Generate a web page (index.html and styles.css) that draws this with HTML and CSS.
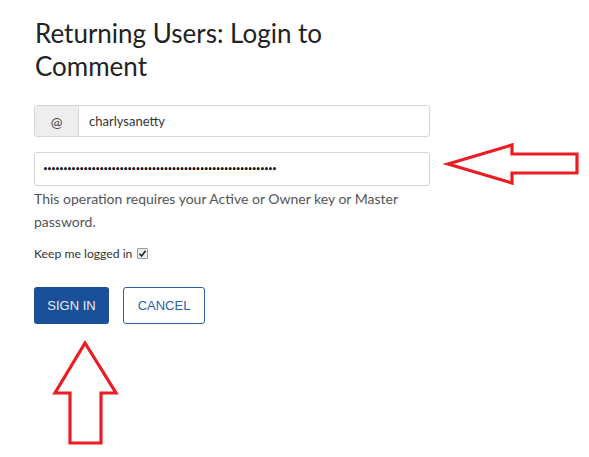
FILE: index.html
```html
<!DOCTYPE html>
<html>
<head>
<meta charset="utf-8">
<link rel="stylesheet" href="styles.css">
</head>
<body>
<div class="page">
  <h2 class="title">Returning Users: Login to Comment</h2>
  <div class="input-group">
    <span class="addon">@</span>
    <span class="field">charlysanetty</span>
  </div>
  <div class="password">
    <span class="dots">••••••••••••••••••••••••••••••••••••••••••••••••••••••••••</span>
  </div>
  <p class="help">This operation requires your Active or Owner key or Master password.</p>
  <label class="keep">Keep me logged in <span class="check"><svg width="9" height="9" viewBox="0 0 9 9"><path d="M1.5 4.8 L3.6 7 L7.6 1.8" fill="none" stroke="#222" stroke-width="1.6"/></svg></span></label>
  <div class="buttons">
    <span class="btn primary">SIGN IN</span>
    <span class="btn outline">CANCEL</span>
  </div>
</div>
<svg class="arrow arrow-left" width="589" height="457" viewBox="0 0 589 457">
  <path d="M448 164 L512 145 L512 154 L577 154 L577 173 L512 173 L512 183 Z" fill="none" stroke="#ec1c24" stroke-width="3.2" stroke-linejoin="miter"/>
  <path d="M85 343 L116 393 L101 393 L101 443 L70 443 L70 393 L55 393 Z" fill="none" stroke="#ec1c24" stroke-width="3.2" stroke-linejoin="miter"/>
</svg>
</body>
</html>
```
FILE: styles.css
```css
html, body {
  margin: 0;
  padding: 0;
  background: #ffffff;
}
body {
  width: 589px;
  height: 457px;
  position: relative;
  overflow: hidden;
  font-family: "Lato", "Open Sans", sans-serif;
  color: #333;
}
.page {
  padding: 17px 0 0 34px;
  width: 396px;
}
.title {
  margin: 0 0 22px 1px;
  font-weight: 400;
  font-size: 26px;
  line-height: 33px;
  color: #222;
  width: 320px;
}
.input-group {
  display: flex;
  height: 32px;
  border: 1px solid #d4d4d4;
  border-radius: 3px;
  box-sizing: border-box;
}
.addon {
  width: 43px;
  background: #eeeeee;
  border-right: 1px solid #d4d4d4;
  display: flex;
  align-items: center;
  justify-content: center;
  font-size: 14px;
  color: #444;
}
.field {
  display: flex;
  align-items: center;
  padding-left: 10px;
  font-size: 13px;
  color: #333;
}
.password {
  margin-top: 15px;
  height: 34px;
  border: 1px solid #d4d4d4;
  border-radius: 3px;
  box-sizing: border-box;
  display: flex;
  align-items: center;
  padding-left: 8px;
}
.dots {
  font-family: "DejaVu Sans Mono", monospace;
  font-size: 8px;
  font-weight: bold;
  letter-spacing: -0.8px;
  color: #111;
}
.help {
  margin: 1px 0 0 0;
  font-size: 14px;
  line-height: 23px;
  color: #555;
}
.keep {
  display: flex;
  align-items: center;
  gap: 5px;
  margin-top: 13px;
  font-size: 12.2px;
  color: #333;
}
.check {
  width: 9px;
  height: 9px;
  border: 1px solid #999;
  background: #eee;
  border-radius: 1px;
  display: inline-flex;
}
.buttons {
  display: flex;
  gap: 14px;
  margin-top: 26px;
}
.btn {
  display: flex;
  align-items: center;
  justify-content: center;
  height: 37px;
  box-sizing: border-box;
  border-radius: 3px;
  font-family: "Liberation Sans", Arial, sans-serif;
  font-size: 13px;
}
.primary {
  width: 75px;
  background: #1a4f9a;
  color: #e6ecf5;
}
.outline {
  width: 82px;
  border: 1px solid #2e60a8;
  color: #2e60a8;
  background: #fff;
}
.arrow {
  position: absolute;
  left: 0;
  top: 0;
  pointer-events: none;
}
```
